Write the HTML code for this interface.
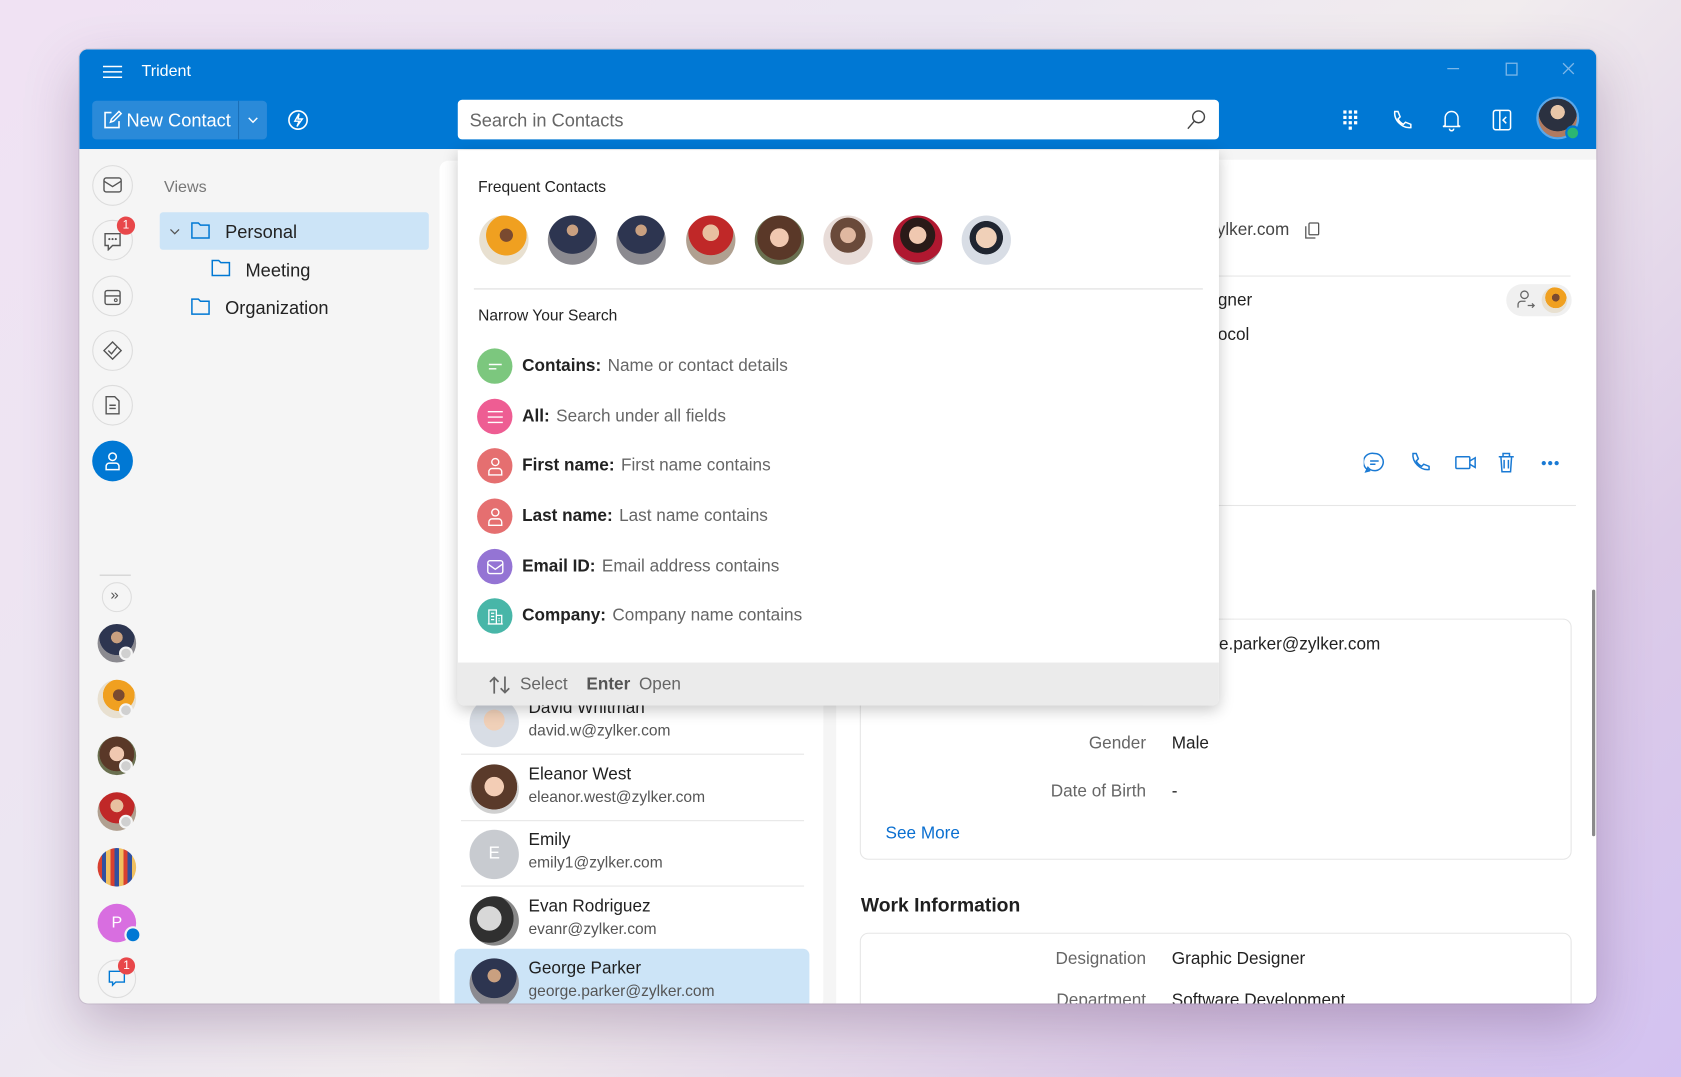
<!DOCTYPE html>
<html><head><meta charset="utf-8"><style>
*{box-sizing:border-box;margin:0;padding:0}
html,body{width:1681px;height:1077px;overflow:hidden}
body{font-family:"Liberation Sans",sans-serif;}
#s{position:absolute;left:0;top:0;width:1568px;height:1005px;transform:scale(1.07207);transform-origin:0 0;
background:linear-gradient(135deg,#f0e2f3 0%,#ece6f2 35%,#f1ecee 55%,#dccbe8 80%,#d3c2f1 100%);overflow:hidden}
.a{position:absolute}
.win{left:74px;top:46px;width:1415px;height:890px;border-radius:8px;overflow:hidden;background:#f5f5f5;box-shadow:0 20px 50px rgba(80,40,90,.28),0 0 0 1px rgba(0,0,0,.08)}
.tb{left:0;top:0;width:1415px;height:93px;background:#0078d4}
.t{color:#fff;font-size:15px}
.rail{width:38px;height:38px;border-radius:50%;border:1.5px solid #dcdcdc;background:#f5f5f5;left:12px}
.av{border-radius:50%;}
.row{position:absolute;left:18px;display:flex;align-items:center;font-size:16px;color:#222}
.ic{width:33px;height:33px;border-radius:50%;margin-right:9px;display:flex;align-items:center;justify-content:center}
.row b{font-weight:bold;margin-right:6px}
.row span{color:#666}
.li{position:absolute;left:20px;width:320px;height:61px;border-bottom:1px solid #e6e6e6}
.li .n{position:absolute;left:63px;top:9px;font-size:16px;color:#1f1f1f}
.li .e{position:absolute;left:63px;top:31px;font-size:14.5px;color:#555}
.li .p{position:absolute;left:8px;top:8px;width:46px;height:46px;border-radius:50%}
.lab{position:absolute;width:240px;text-align:right;font-size:16px;color:#666}
.val{position:absolute;font-size:16px;color:#222}
</style></head><body><div id="s">
<div class="a win">
 <div class="a tb">
  <svg class="a" style="left:22px;top:14px" width="18" height="14"><path d="M0 2h18M0 7h18M0 12h18" stroke="#fff" stroke-width="1.4"/></svg>
  <div class="a t" style="left:58px;top:12px">Trident</div>
  <svg class="a" style="left:1274px;top:12px" width="150" height="16"><path d="M2 6h11" stroke="#7db7e8" stroke-width="1.2"/><rect x="57" y="1" width="10" height="11" fill="none" stroke="#7db7e8" stroke-width="1.2"/><path d="M110 1l10 10M120 1l-10 10" stroke="#7db7e8" stroke-width="1.2"/></svg>
  <div class="a" style="left:12px;top:48px;width:163px;height:36px;border-radius:4px;background:#2a8ad9"></div>
  <div class="a" style="left:148px;top:48px;width:1px;height:36px;background:#1a6fb8"></div>
  <svg class="a" style="left:21px;top:56px" width="20" height="20"><path d="M9 3H3v14h13v-6" fill="none" stroke="#fff" stroke-width="1.5"/><path d="M8 12l1-3 7-7 2 2-7 7z" fill="none" stroke="#fff" stroke-width="1.4"/></svg>
  <div class="a t" style="left:44px;top:57px;font-size:17px">New Contact</div>
  <svg class="a" style="left:157px;top:62px" width="10" height="8"><path d="M1 2l4 4 4-4" fill="none" stroke="#fff" stroke-width="1.3"/></svg>
  <svg class="a" style="left:194px;top:56px" width="20" height="20"><circle cx="10" cy="10" r="8.5" fill="none" stroke="#fff" stroke-width="1.5"/><path d="M11 4l-4 7h4l-2 5 5-7h-4z" fill="none" stroke="#fff" stroke-width="1.3"/></svg>
  <div class="a" style="left:353px;top:47px;width:710px;height:37px;background:#fff;border-radius:4px"></div>
  <div class="a" style="left:364px;top:57px;font-size:17px;color:#666">Search in Contacts</div>
  <svg class="a" style="left:1032px;top:56px" width="20" height="20"><circle cx="12" cy="7" r="5.5" fill="none" stroke="#444" stroke-width="1.3"/><path d="M8 11l-6 7" stroke="#444" stroke-width="1.3"/></svg>
  <svg class="a" style="left:1178px;top:56px" width="16" height="20"><g fill="#fff"><rect x="1" y="1" width="3" height="3"/><rect x="6" y="1" width="3" height="3"/><rect x="11" y="1" width="3" height="3"/><rect x="1" y="6" width="3" height="3"/><rect x="6" y="6" width="3" height="3"/><rect x="11" y="6" width="3" height="3"/><rect x="1" y="11" width="3" height="3"/><rect x="6" y="11" width="3" height="3"/><rect x="11" y="11" width="3" height="3"/><rect x="6" y="16" width="3" height="3"/></g></svg>
  <svg class="a" style="left:1223px;top:56px" width="20" height="20"><path d="M4 2l3 0 2 5-2 2c1 2 3 4 5 5l2-2 5 2v3c-8 1-16-7-15-15z" fill="none" stroke="#fff" stroke-width="1.4"/></svg>
  <svg class="a" style="left:1271px;top:55px" width="18" height="22"><path d="M3 16V9a6 6 0 0112 0v7l2 1H1z" fill="none" stroke="#fff" stroke-width="1.4"/><path d="M7 19a2 2 0 004 0" fill="none" stroke="#fff" stroke-width="1.4"/></svg>
  <svg class="a" style="left:1318px;top:56px" width="18" height="20"><rect x="1" y="1" width="16" height="18" rx="2" fill="none" stroke="#fff" stroke-width="1.4"/><path d="M7 1v18M13 7l-3 3 3 3" fill="none" stroke="#fff" stroke-width="1.4"/></svg>
  <div class="a av" style="left:1359px;top:44px;width:40px;height:40px;border:2px solid #5aa8ea;background:radial-gradient(circle at 50% 35%,#e8c6a8 0 22%,#2b3140 23% 60%,#b07a60 61%)"></div>
  <div class="a av" style="left:1386px;top:71px;width:14px;height:14px;background:#2bb673;border:2px solid #0078d4"></div>
 </div>
 <div class="a rail" style="top:108px"></div>
 <svg class="a" style="left:22px;top:119px" width="18" height="16"><rect x="1" y="1" width="16" height="13" rx="2" fill="none" stroke="#555" stroke-width="1.3"/><path d="M1 4l8 5 8-5" fill="none" stroke="#555" stroke-width="1.3"/></svg>
 <div class="a rail" style="top:159px"></div>
 <svg class="a" style="left:22px;top:170px" width="18" height="18"><path d="M2 2h14v11H9l-4 4v-4H2z" fill="none" stroke="#555" stroke-width="1.3"/><circle cx="6" cy="7" r="1" fill="#555"/><circle cx="9" cy="7" r="1" fill="#555"/><circle cx="12" cy="7" r="1" fill="#555"/></svg>
 <div class="a av" style="left:35px;top:156px;width:17px;height:17px;background:#e8474a;color:#fff;font-size:11px;text-align:center;line-height:17px">1</div>
 <div class="a rail" style="top:211px"></div>
 <svg class="a" style="left:22px;top:222px" width="18" height="18"><rect x="2" y="3" width="14" height="13" rx="2" fill="none" stroke="#555" stroke-width="1.3"/><path d="M2 8h14" stroke="#555" stroke-width="1.3"/><circle cx="12" cy="12" r="1.3" fill="none" stroke="#555"/></svg>
 <div class="a rail" style="top:262px"></div>
 <svg class="a" style="left:22px;top:272px" width="18" height="18"><path d="M9 1l8 8-8 8-8-8z" fill="none" stroke="#555" stroke-width="1.3"/><path d="M5 9l3 3 5-6" fill="none" stroke="#555" stroke-width="1.3"/></svg>
 <div class="a rail" style="top:313px"></div>
 <svg class="a" style="left:23px;top:323px" width="16" height="18"><path d="M2 1h8l4 4v12H2z" fill="none" stroke="#555" stroke-width="1.3"/><path d="M5 9h6M5 12h6" stroke="#555" stroke-width="1.3"/></svg>
 <div class="a av" style="left:12px;top:365px;width:38px;height:38px;background:#0078d4"></div>
 <svg class="a" style="left:23px;top:374px" width="16" height="20"><circle cx="8" cy="6" r="3.5" fill="none" stroke="#fff" stroke-width="1.4"/><path d="M2 18v-3a3 3 0 013-3h6a3 3 0 013 3v3z" fill="none" stroke="#fff" stroke-width="1.4"/></svg>
 <div class="a" style="left:19px;top:490px;width:29px;height:1px;background:#ccc"></div>
 <div class="a av" style="left:21px;top:497px;width:28px;height:28px;border:1.3px solid #ddd"></div>
 <div class="a" style="left:29px;top:500px;font-size:14px;color:#555">»</div>
 <div class="a av" style="left:17px;top:536px;width:36px;height:36px;background:radial-gradient(circle at 50% 35%,#c9a080 0 18%,#2d3550 19% 55%,#8b8a90 56%)"></div>
 <div class="a av" style="left:17px;top:588px;width:36px;height:36px;background:radial-gradient(circle at 55% 40%,#7a4a30 0 18%,#f0a020 19% 50%,#e8e0d0 51%)"></div>
 <div class="a av" style="left:17px;top:641px;width:36px;height:36px;background:radial-gradient(circle at 50% 45%,#f0c8b0 0 25%,#5a3828 26% 60%,#6a7050 61%)"></div>
 <div class="a av" style="left:17px;top:693px;width:36px;height:36px;background:radial-gradient(circle at 50% 35%,#e8c0a0 0 20%,#c02828 21% 55%,#b0a090 56%)"></div>
 <div class="a av" style="left:17px;top:745px;width:36px;height:36px;background:repeating-linear-gradient(90deg,#d84030 0 4px,#3050a0 4px 8px,#f0c060 8px 12px),#e0a070"></div>
 <div class="a av" style="left:17px;top:797px;width:36px;height:36px;background:#d86ee0;color:#fff;text-align:center;line-height:36px;font-size:15px">P</div>
 <div class="a av" style="left:42px;top:818px;width:16px;height:16px;background:#0078d4;border:2px solid #f5f5f5"></div>
 <div class="a av" style="left:37px;top:610px;width:13px;height:13px;background:#d0d0d0;border:2px solid #f5f5f5"></div>
 <div class="a av" style="left:37px;top:557px;width:13px;height:13px;background:#d0d0d0;border:2px solid #f5f5f5"></div>
 <div class="a av" style="left:37px;top:662px;width:13px;height:13px;background:#d0d0d0;border:2px solid #f5f5f5"></div>
 <div class="a av" style="left:37px;top:714px;width:13px;height:13px;background:#d0d0d0;border:2px solid #f5f5f5"></div>
 <div class="a av" style="left:17px;top:849px;width:36px;height:36px;border:1.3px solid #ddd"></div>
 <svg class="a" style="left:27px;top:859px" width="16" height="16"><path d="M1 1h14v10H7l-3 3v-3H1z" fill="none" stroke="#0078d4" stroke-width="1.3"/></svg>
 <div class="a av" style="left:36px;top:847px;width:16px;height:16px;background:#e8474a;color:#fff;font-size:11px;text-align:center;line-height:16px">1</div>
 <div class="a" style="left:79px;top:120px;font-size:15px;color:#777">Views</div>
 <div class="a" style="left:75px;top:152px;width:251px;height:35px;background:#cce4f7;border-radius:3px"></div>
 <svg class="a" style="left:84px;top:166px" width="10" height="8"><path d="M1 2l4 4 4-4" fill="none" stroke="#555" stroke-width="1.2"/></svg>
 <svg class="a" style="left:104px;top:161px" width="18" height="16"><path d="M1 1h6l2 2h8v12H1z" fill="none" stroke="#0078d4" stroke-width="1.4"/></svg>
 <div class="a" style="left:136px;top:161px;font-size:17px;color:#222">Personal</div>
 <svg class="a" style="left:123px;top:196px" width="18" height="16"><path d="M1 1h6l2 2h8v12H1z" fill="none" stroke="#0078d4" stroke-width="1.4"/></svg>
 <div class="a" style="left:155px;top:197px;font-size:17px;color:#222">Meeting</div>
 <svg class="a" style="left:104px;top:232px" width="18" height="16"><path d="M1 1h6l2 2h8v12H1z" fill="none" stroke="#0078d4" stroke-width="1.4"/></svg>
 <div class="a" style="left:136px;top:232px;font-size:17px;color:#222">Organization</div>
 <div class="a" style="left:336px;top:104px;width:358px;height:790px;background:#fff;border-radius:8px">
  <div class="li" style="top:493px"><div class="p" style="background:radial-gradient(circle at 50% 45%,#f0d0b8 0 28%,#d8dde5 29%)"></div><div class="n">David Whitman</div><div class="e">david.w@zylker.com</div></div>
  <div class="li" style="top:555px"><div class="p" style="background:radial-gradient(circle at 50% 45%,#f3cdb5 0 26%,#5a3a2a 27% 62%,#d0d0d0 63%)"></div><div class="n">Eleanor West</div><div class="e">eleanor.west@zylker.com</div></div>
  <div class="li" style="top:616px"><div class="p" style="background:#c8cbd0;color:#fff;text-align:center;line-height:46px;font-size:16px">E</div><div class="n">Emily</div><div class="e">emily1@zylker.com</div></div>
  <div class="li" style="top:678px"><div class="p" style="background:radial-gradient(circle at 40% 45%,#d8d8d8 0 30%,#303030 31% 60%,#888 61%)"></div><div class="n">Evan Rodriguez</div><div class="e">evanr@zylker.com</div></div>
  <div class="a" style="left:14px;top:735px;width:331px;height:60px;background:#cce4f7;border-radius:6px"></div>
  <div class="li" style="top:736px;border:0"><div class="p" style="background:radial-gradient(circle at 50% 35%,#c9a080 0 16%,#2d3550 17% 55%,#8b8a90 56%)"></div><div class="n">George Parker</div><div class="e">george.parker@zylker.com</div></div>
 </div>
 <div class="a" style="left:706px;top:103px;width:709px;height:800px;background:#fff">
  <div class="a" style="left:355px;top:57px;font-size:16px;color:#444">ylker.com</div>
  <svg class="a" style="left:437px;top:58px" width="14" height="16"><rect x="4" y="1" width="9" height="11" rx="1" fill="none" stroke="#555" stroke-width="1.2"/><path d="M1 4v11h9" fill="none" stroke="#555" stroke-width="1.2"/></svg>
  <div class="a" style="left:310px;top:108px;width:375px;height:1px;background:#e6e6e6"></div>
  <div class="a" style="left:356px;top:123px;font-size:16px;color:#222">gner</div>
  <div class="a" style="left:356px;top:155px;font-size:16px;color:#222">ocol</div>
  <div class="a" style="left:625px;top:116px;width:61px;height:30px;border-radius:15px;background:#f0f0f0"></div>
  <svg class="a" style="left:634px;top:121px" width="18" height="20"><circle cx="8" cy="5" r="3.5" fill="none" stroke="#666" stroke-width="1.2"/><path d="M2 17v-3a3 3 0 013-3h4M11 15h6M15 13l2 2-2 2" fill="none" stroke="#666" stroke-width="1.2"/></svg>
  <div class="a av" style="left:658px;top:119px;width:24px;height:24px;background:radial-gradient(circle at 55% 40%,#7a4a30 0 18%,#f0a020 19% 50%,#e8e0d0 51%)"></div>
  <svg class="a" style="left:492px;top:272px" width="190" height="22" fill="none" stroke="#1a7ad4" stroke-width="1.4">
   <path d="M10 2a8 8 0 11-6 13l-2 4 4-1A8 8 0 0110 2zM6 9h8M6 12h5"/>
   <path d="M46 2h3l2 5-2 2c1 2 3 4 5 5l2-2 5 2v3c-8 1-16-7-15-15z"/>
   <rect x="86" y="5" width="13" height="11" rx="1"/><path d="M99 9l5-3v9l-5-3"/>
   <path d="M126 5h14M130 5V2h6v3M128 5l1 14h8l1-14M131 8v8M135 8v8"/>
   <circle cx="168" cy="11" r="1.3" fill="#1a7ad4"/><circle cx="174" cy="11" r="1.3" fill="#1a7ad4"/><circle cx="180" cy="11" r="1.3" fill="#1a7ad4"/>
  </svg>
  <div class="a" style="left:0;top:322px;width:690px;height:1px;background:#e6e6e6"></div>
  <div class="a" style="left:22px;top:428px;width:664px;height:225px;border:1px solid #e6e6e6;border-radius:8px"></div>
  <div class="a val" style="left:357px;top:444px">e.parker@zylker.com</div>
  <div class="lab" style="left:49px;top:536px">Gender</div><div class="val" style="left:313px;top:536px">Male</div>
  <div class="lab" style="left:49px;top:581px">Date of Birth</div><div class="val" style="left:313px;top:581px">-</div>
  <div class="a" style="left:46px;top:620px;font-size:16px;color:#0a6fd0">See More</div>
  <div class="a" style="left:23px;top:685px;font-size:18px;color:#1f1f1f;font-weight:bold">Work Information</div>
  <div class="a" style="left:22px;top:721px;width:664px;height:140px;border:1px solid #e6e6e6;border-radius:8px"></div>
  <div class="lab" style="left:49px;top:737px">Designation</div><div class="val" style="left:313px;top:737px">Graphic Designer</div>
  <div class="lab" style="left:49px;top:776px">Department</div><div class="val" style="left:313px;top:776px">Software Development</div>
  <div class="a" style="left:705px;top:401px;width:3px;height:230px;background:#8a8a8a;border-radius:2px"></div>
 </div>
 <div class="a" style="left:353px;top:94px;width:710px;height:518px;background:#fff;border-radius:0 0 6px 6px;box-shadow:0 4px 14px rgba(0,0,0,.22);overflow:hidden">
  <div class="a" style="left:19px;top:27px;font-size:14.5px;color:#222">Frequent Contacts</div>
  <div class="a av" style="left:20px;top:61px;width:46px;height:46px;background:radial-gradient(circle at 55% 40%,#7a4a30 0 16%,#f0a020 17% 50%,#e8e0d0 51%)"></div>
  <div class="a av" style="left:84px;top:61px;width:46px;height:46px;background:radial-gradient(circle at 50% 30%,#c9a080 0 13%,#2d3550 14% 55%,#8b8a90 56%)"></div>
  <div class="a av" style="left:148px;top:61px;width:46px;height:46px;background:radial-gradient(circle at 50% 30%,#c9a080 0 13%,#2d3550 14% 55%,#8b8a90 56%)"></div>
  <div class="a av" style="left:213px;top:61px;width:46px;height:46px;background:radial-gradient(circle at 50% 35%,#e8c0a0 0 20%,#c02828 21% 55%,#b0a090 56%)"></div>
  <div class="a av" style="left:277px;top:61px;width:46px;height:46px;background:radial-gradient(circle at 50% 45%,#f0c8b0 0 25%,#5a3828 26% 60%,#6a7050 61%)"></div>
  <div class="a av" style="left:341px;top:61px;width:46px;height:46px;background:radial-gradient(circle at 50% 40%,#e0b8a0 0 20%,#6a4a3a 21% 45%,#e8dcd8 46%)"></div>
  <div class="a av" style="left:406px;top:61px;width:46px;height:46px;background:radial-gradient(circle at 50% 40%,#f0c8b0 0 22%,#2a1a18 23% 45%,#b01830 46% 70%,#a0a0a0 71%)"></div>
  <div class="a av" style="left:470px;top:61px;width:46px;height:46px;background:radial-gradient(circle at 50% 45%,#f0d0b8 0 28%,#202530 29% 45%,#d8dde5 46%)"></div>
  <div class="a" style="left:15px;top:129px;width:680px;height:1px;background:#ddd"></div>
  <div class="a" style="left:19px;top:147px;font-size:14.5px;color:#222">Narrow Your Search</div>
  <div class="row" style="top:185px"><div class="ic" style="background:#7cc77e"><svg width="14" height="6"><path d="M1 1h12M1 5h7" stroke="#fff" stroke-width="1.3"/></svg></div><b>Contains:</b><span>Name or contact details</span></div>
  <div class="row" style="top:232px"><div class="ic" style="background:#ee5d93"><svg width="16" height="12"><path d="M1 1h14M1 6h14M1 11h14" stroke="#fff" stroke-width="1.3"/></svg></div><b>All:</b><span>Search under all fields</span></div>
  <div class="row" style="top:278px"><div class="ic" style="background:#e56f70"><svg width="14" height="18"><circle cx="7" cy="5" r="3.3" fill="none" stroke="#fff" stroke-width="1.3"/><path d="M1 17v-3a3 3 0 013-3h6a3 3 0 013 3v3z" fill="none" stroke="#fff" stroke-width="1.3"/></svg></div><b>First name:</b><span>First name contains</span></div>
  <div class="row" style="top:325px"><div class="ic" style="background:#e56f70"><svg width="14" height="18"><circle cx="7" cy="5" r="3.3" fill="none" stroke="#fff" stroke-width="1.3"/><path d="M1 17v-3a3 3 0 013-3h6a3 3 0 013 3v3z" fill="none" stroke="#fff" stroke-width="1.3"/></svg></div><b>Last name:</b><span>Last name contains</span></div>
  <div class="row" style="top:372px"><div class="ic" style="background:#9474d4"><svg width="16" height="14"><rect x="1" y="1" width="14" height="12" rx="2" fill="none" stroke="#fff" stroke-width="1.3"/><path d="M1 4l7 5 7-5" fill="none" stroke="#fff" stroke-width="1.3"/></svg></div><b>Email ID:</b><span>Email address contains</span></div>
  <div class="row" style="top:418px"><div class="ic" style="background:#48b6a8"><svg width="16" height="16"><path d="M2 15V2h7v13M9 7h5v8M1 15h14M4 5h3M4 8h3M4 11h3M11 10h1M11 12h1" fill="none" stroke="#fff" stroke-width="1.2"/></svg></div><b>Company:</b><span>Company name contains</span></div>
  <div class="a" style="left:0;top:478px;width:710px;height:40px;background:#ebebeb"></div>
  <svg class="a" style="left:29px;top:490px" width="20" height="18"><path d="M5 17V2M1 6l4-4 4 4M15 1v15M11 12l4 4 4-4" fill="none" stroke="#666" stroke-width="1.6"/></svg>
  <div class="a" style="left:58px;top:490px;font-size:16px;color:#666">Select</div>
  <div class="a" style="left:120px;top:490px;font-size:16px;color:#555;font-weight:bold">Enter</div>
  <div class="a" style="left:169px;top:490px;font-size:16px;color:#666">Open</div>
 </div>
</div>
</div></body></html>
